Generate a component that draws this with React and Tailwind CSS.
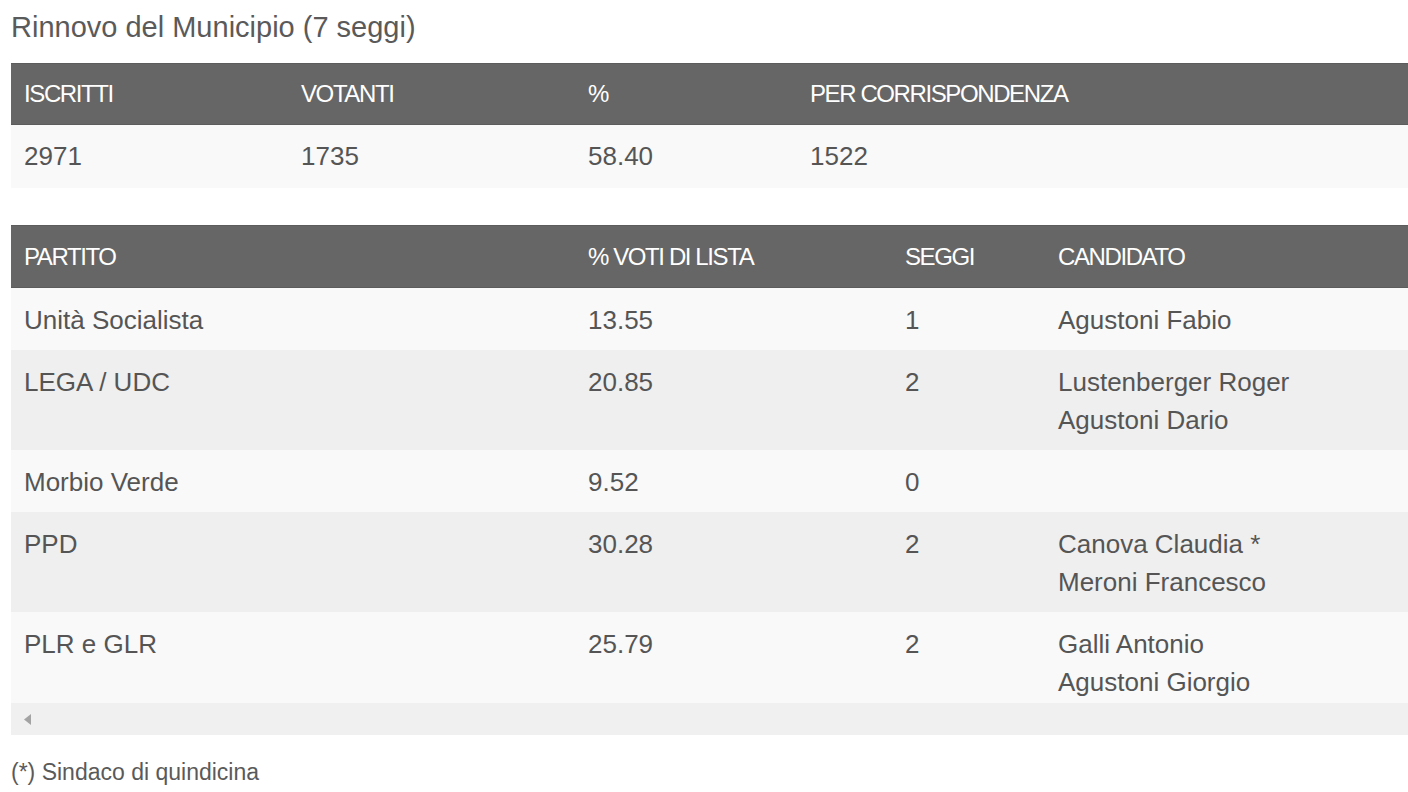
import React from "react";

const turnout = { iscritti: "2971", votanti: "1735", perc: "58.40", corr: "1522" };

const parties = [
  { name: "Unità Socialista", perc: "13.55", seats: "1", candidates: ["Agustoni Fabio"] },
  { name: "LEGA / UDC", perc: "20.85", seats: "2", candidates: ["Lustenberger Roger", "Agustoni Dario"] },
  { name: "Morbio Verde", perc: "9.52", seats: "0", candidates: [] },
  { name: "PPD", perc: "30.28", seats: "2", candidates: ["Canova Claudia *", "Meroni Francesco"] },
  { name: "PLR e GLR", perc: "25.79", seats: "2", candidates: ["Galli Antonio", "Agustoni Giorgio"] },
];

function HeaderRow({ cols, h }) {
  return (
    <div className={`flex ${h} items-center bg-[#666666] border-y border-[#5c5c5c] text-white text-[24px] tracking-[-1.4px]`}>
      {cols.map((c, i) => (
        <div key={i} className={`${c.w} shrink-0 pl-[13px]`}>
          {c.label}
        </div>
      ))}
    </div>
  );
}

export default function App() {
  return (
    <div className="min-h-screen bg-white pl-[11px] text-[#555555] overflow-hidden" style={{ fontFamily: '"Liberation Sans", Arial, sans-serif' }}>
      <h2 className="pt-[9px] h-[63px] text-[29px] leading-[36px] text-[#5a5a5a]">Rinnovo del Municipio (7 seggi)</h2>

      {/* Affluenza */}
      <div className="w-[1420px]">
        <HeaderRow
          h="h-[62px]"
          cols={[
            { w: "w-[277px]", label: "ISCRITTI" },
            { w: "w-[287px]", label: "VOTANTI" },
            { w: "w-[222px]", label: "%" },
            { w: "w-[600px]", label: "PER CORRISPONDENZA" },
          ]}
        />
        <div className="flex h-[63px] items-center bg-[#f9f9f9] text-[26px]">
          <div className="w-[277px] shrink-0 pl-[13px]">{turnout.iscritti}</div>
          <div className="w-[287px] shrink-0 pl-[13px]">{turnout.votanti}</div>
          <div className="w-[222px] shrink-0 pl-[13px]">{turnout.perc}</div>
          <div className="w-[600px] shrink-0 pl-[13px]">{turnout.corr}</div>
        </div>
      </div>

      {/* Risultati */}
      <div className="mt-[37px] w-[1420px]">
        <HeaderRow
          h="h-[63px]"
          cols={[
            { w: "w-[564px]", label: "PARTITO" },
            { w: "w-[317px]", label: "% VOTI DI LISTA" },
            { w: "w-[153px]", label: "SEGGI" },
            { w: "w-[380px]", label: "CANDIDATO" },
          ]}
        />
        {parties.map((p, i) => {
          const last = i === parties.length - 1;
          return (
            <div
              key={p.name}
              className={`flex items-start text-[26px] leading-[38px] pt-[13px] ${last ? "pb-[2px]" : "pb-[11px]"} ${i % 2 === 0 ? "bg-[#f9f9f9]" : "bg-[#efefef]"}`}
            >
              <div className="w-[564px] shrink-0 pl-[13px]">{p.name}</div>
              <div className="w-[317px] shrink-0 pl-[13px]">{p.perc}</div>
              <div className="w-[153px] shrink-0 pl-[13px]">{p.seats}</div>
              <div className="w-[380px] shrink-0 pl-[13px] min-h-[38px]">
                {p.candidates.map((c) => (
                  <div key={c}>{c}</div>
                ))}
              </div>
            </div>
          );
        })}
        {/* scrollbar orizzontale */}
        <div className="flex h-[32px] items-center bg-[#f0f0f0] pl-[12px]">
          <svg width="9" height="13" viewBox="0 0 9 13">
            <path d="M8 1 L1 6.5 L8 12 Z" fill="#a3a3a3" />
          </svg>
        </div>
      </div>

      <p className="mt-[23px] text-[23px] leading-[28px] text-[#5a5a5a]">(*) Sindaco di quindicina</p>
    </div>
  );
}
